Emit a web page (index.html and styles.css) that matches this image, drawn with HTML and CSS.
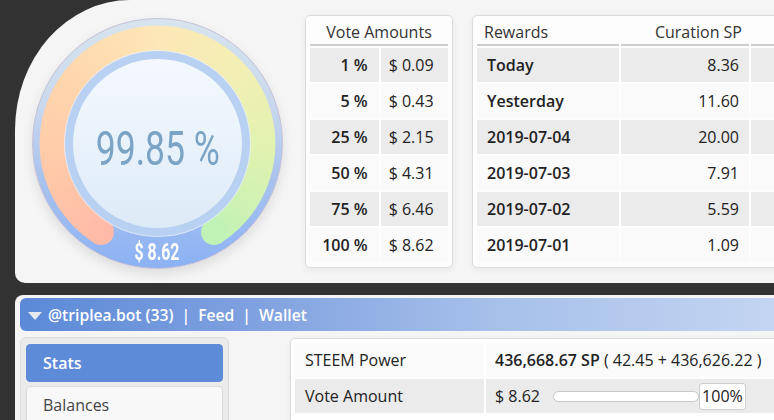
FILE: index.html
```html
<!DOCTYPE html>
<html>
<head>
<meta charset="utf-8">
<link rel="stylesheet" href="styles.css">
</head>
<body>
<div class="page">
  <div class="top">
    <div class="gauge">
      <div class="arc"></div>
      <div class="cap cap-l"></div>
      <div class="cap cap-r"></div>
      <div class="ring"></div>
      <div class="disk"></div>
      <div class="pct"><span>99.85 %</span></div>
      <div class="usd"><span>$ 8.62</span></div>
    </div>
    <div class="card va">
      <table class="tbl">
        <tr><th colspan="2">Vote Amounts</th></tr>
        <tr class="odd"><td class="k">1 %</td><td class="v">$ 0.09</td></tr>
        <tr><td class="k">5 %</td><td class="v">$ 0.43</td></tr>
        <tr class="odd"><td class="k">25 %</td><td class="v">$ 2.15</td></tr>
        <tr><td class="k">50 %</td><td class="v">$ 4.31</td></tr>
        <tr class="odd"><td class="k">75 %</td><td class="v">$ 6.46</td></tr>
        <tr><td class="k">100 %</td><td class="v">$ 8.62</td></tr>
      </table>
    </div>
    <div class="card rw">
      <table class="tbl">
        <tr><th class="h1">Rewards</th><th class="h2">Curation SP</th><th class="h3"></th></tr>
        <tr class="odd"><td class="d">Today</td><td class="n">8.36</td><td></td></tr>
        <tr><td class="d">Yesterday</td><td class="n">11.60</td><td></td></tr>
        <tr class="odd"><td class="d">2019-07-04</td><td class="n">20.00</td><td></td></tr>
        <tr><td class="d">2019-07-03</td><td class="n">7.91</td><td></td></tr>
        <tr class="odd"><td class="d">2019-07-02</td><td class="n">5.59</td><td></td></tr>
        <tr><td class="d">2019-07-01</td><td class="n">1.09</td><td></td></tr>
      </table>
    </div>
  </div>

  <div class="panel">
    <div class="bar"><span class="tri"></span><span>@triplea.bot (33)</span><span class="sep">|</span><span>Feed</span><span class="sep">|</span><span>Wallet</span></div>
    <div class="body">
      <div class="nav">
        <div class="item active">Stats</div>
        <div class="item">Balances</div>
      </div>
      <div class="card content">
        <table class="tbl st">
          <tr><td class="c1">STEEM Power</td><td class="c2"><b>436,668.67 SP</b> ( 42.45 + 436,626.22 )</td></tr>
          <tr class="odd"><td class="c1">Vote Amount</td><td class="c2"><div class="vote"><span>$ 8.62</span><span class="track"></span><span class="box">100%</span></div></td></tr>
        </table>
      </div>
    </div>
  </div>
</div>
</body>
</html>
```
FILE: styles.css
```css
html, body {
  margin: 0;
  padding: 0;
  overflow: hidden;
  background: #323232;
}
body {
  width: 774px;
  height: 420px;
  font-family: "Open Sans", "Liberation Sans", sans-serif;
  font-size: 16px;
  color: #222;
}
.page {
  width: 774px;
  height: 420px;
  overflow: hidden;
}
.top {
  margin-left: 15px;
  width: 860px;
  height: 283px;
  box-sizing: border-box;
  background: #f5f5f5;
  border-radius: 115px 0 0 10px / 130px 0 0 10px;
  display: flex;
  align-items: flex-start;
  padding: 15px 0 0 17px;
}

/* gauge */
.gauge {
  position: relative;
  flex: 0 0 auto;
  width: 251px;
  height: 251px;
  margin-top: 3px;
  box-sizing: border-box;
  border-radius: 50%;
  border: 1px solid #c6c0d6;
  background: linear-gradient(180deg, #d8e4ee 0%, #c8d8ee 35%, #a8c2ee 65%, #8cb2f4 100%);
  box-shadow: 0 5px 12px rgba(0, 0, 0, 0.10);
}
.arc {
  position: absolute;
  left: 6px;
  top: 6px;
  width: 237px;
  height: 237px;
  border-radius: 50%;
  background: conic-gradient(from 212deg,
    #ffbba8 0deg,
    #ffc8a8 40deg,
    #ffd6ae 95deg,
    #fde7b6 148deg,
    #f3efb4 195deg,
    #dff2b0 245deg,
    #c0f2b6 296deg,
    transparent 296deg);
  -webkit-mask: radial-gradient(circle closest-side, transparent 77.6%, #000 78.2%, #000 99%, transparent 100%);
  mask: radial-gradient(circle closest-side, transparent 77.6%, #000 78.2%, #000 99%, transparent 100%);
}
.cap {
  position: absolute;
  width: 26px;
  height: 26px;
  border-radius: 50%;
  top: 200px;
}
.cap-l { left: 55px; background: #ffbba8; }
.cap-r { left: 168px; background: #c0f2b6; }
.ring {
  position: absolute;
  left: 32px;
  top: 32px;
  width: 185px;
  height: 185px;
  border-radius: 50%;
  background: #b8d0f2;
  box-shadow: 0 0 0 1px rgba(235, 240, 250, 0.8);
}
.disk {
  position: absolute;
  left: 40px;
  top: 40px;
  width: 169px;
  height: 169px;
  border-radius: 50%;
  background: linear-gradient(180deg, #f4f8fe 0%, #e9f2fb 50%, #ddebf7 100%);
}
.pct, .usd {
  position: absolute;
  left: 0;
  right: 0;
  display: flex;
  justify-content: center;
  font-family: Roboto, "Liberation Sans", sans-serif;
  white-space: nowrap;
}
.pct {
  top: 102px;
  font-size: 48px;
  line-height: 56px;
  color: #7aa3c5;
}
.pct span { transform: scaleX(0.74); }
.usd {
  top: 219px;
  font-size: 24px;
  line-height: 28px;
  font-weight: 700;
  color: #fff;
}
.usd span { transform: scaleX(0.66); }

/* cards */
.card {
  background: #fdfdfd;
  border: 1px solid #dcdcdc;
  border-radius: 5px;
  box-shadow: 0 2px 6px rgba(0, 0, 0, 0.06);
  box-sizing: border-box;
  flex: 0 0 auto;
}
.va {
  width: 148px;
  height: 253px;
  margin-left: 22px;
  padding: 2px;
}
.rw {
  width: 420px;
  height: 253px;
  margin-left: 19px;
  padding: 2px;
}
.tbl {
  border-collapse: separate;
  border-spacing: 2px;
}
.tbl th {
  font-weight: 400;
  color: #333;
  height: 24px;
  padding: 0;
  border-bottom: 2px solid #cdcdcd;
  line-height: 22px;
}
.tbl td {
  height: 34px;
  padding: 0;
  line-height: 22px;
  background: #fafafa;
  white-space: nowrap;
}
.tbl tr.odd td { background: #ebebeb; }
.va .tbl th { text-align: center; }
.va .k {
  width: 59px;
  text-align: right;
  padding-right: 11px;
  font-weight: 600;
}
.va .v {
  width: 61px;
  padding-left: 8px;
}
.rw .h1 { width: 135px; text-align: left; padding-left: 7px; }
.rw .h2 { width: 121px; text-align: right; padding-right: 7px; }
.rw .h3 { width: 120px; }
.rw .d { padding-left: 10px; font-weight: 600; }
.rw .n { text-align: right; padding-right: 10px; }

/* bottom panel */
.panel {
  margin: 12px 0 0 15px;
  width: 860px;
  height: 140px;
  background: #f5f5f5;
  border-radius: 8px 0 0 0;
  padding: 3px 0 0 5px;
  box-sizing: border-box;
}
.bar {
  height: 33px;
  border-radius: 6px 0 0 6px;
  background: linear-gradient(90deg, #5b89d7 0%, #7d9fdf 25%, #a6c0ea 55%, #cddcf4 100%);
  display: flex;
  align-items: center;
  padding-left: 8px;
  color: #fff;
  font-weight: 600;
  font-size: 15.7px;
  white-space: nowrap;
}
.tri {
  width: 0;
  height: 0;
  border-left: 7.5px solid transparent;
  border-right: 7.5px solid transparent;
  border-top: 8px solid #e6e9f0;
  margin-right: 6px;
  margin-top: 2px;
}
.sep { margin: 0 8px; }
.body {
  display: flex;
  align-items: flex-start;
  margin-top: 6px;
}
.nav {
  width: 209px;
  height: 100px;
  box-sizing: border-box;
  background: #ebebeb;
  border: 1px solid #dcdcdc;
  border-radius: 6px;
  padding: 6px 5px;
  flex: 0 0 auto;
}
.item {
  height: 38px;
  box-sizing: border-box;
  border-radius: 4px;
  padding-left: 16px;
  display: flex;
  align-items: center;
  background: #f8f8f8;
  border: 1px solid #dadada;
  color: #444;
  margin-bottom: 4px;
}
.item.active {
  background: #5e8bd8;
  border-color: #5e8bd8;
  color: #fff;
  font-weight: 600;
}
.content {
  margin-left: 61px;
  margin-top: 1px;
  width: 600px;
  height: 100px;
  padding: 2px;
  background: #fff;
}
.st td { height: 34px; }
.st .c1 { width: 179px; padding-left: 10px; }
.st .c2 { padding-left: 9px; width: 380px; }
.st b { font-weight: 600; }
.vote {
  display: flex;
  align-items: center;
}
.track {
  width: 146px;
  height: 11px;
  box-sizing: border-box;
  border: 1px solid #c8c8c8;
  border-radius: 6px;
  background: #fff;
  margin-left: 13px;
}
.box {
  width: 47px;
  height: 27px;
  box-sizing: border-box;
  border: 1px solid #cdcdcd;
  border-radius: 3px;
  background: #fff;
  display: flex;
  align-items: center;
  justify-content: center;
  margin-left: 0;
}
```
